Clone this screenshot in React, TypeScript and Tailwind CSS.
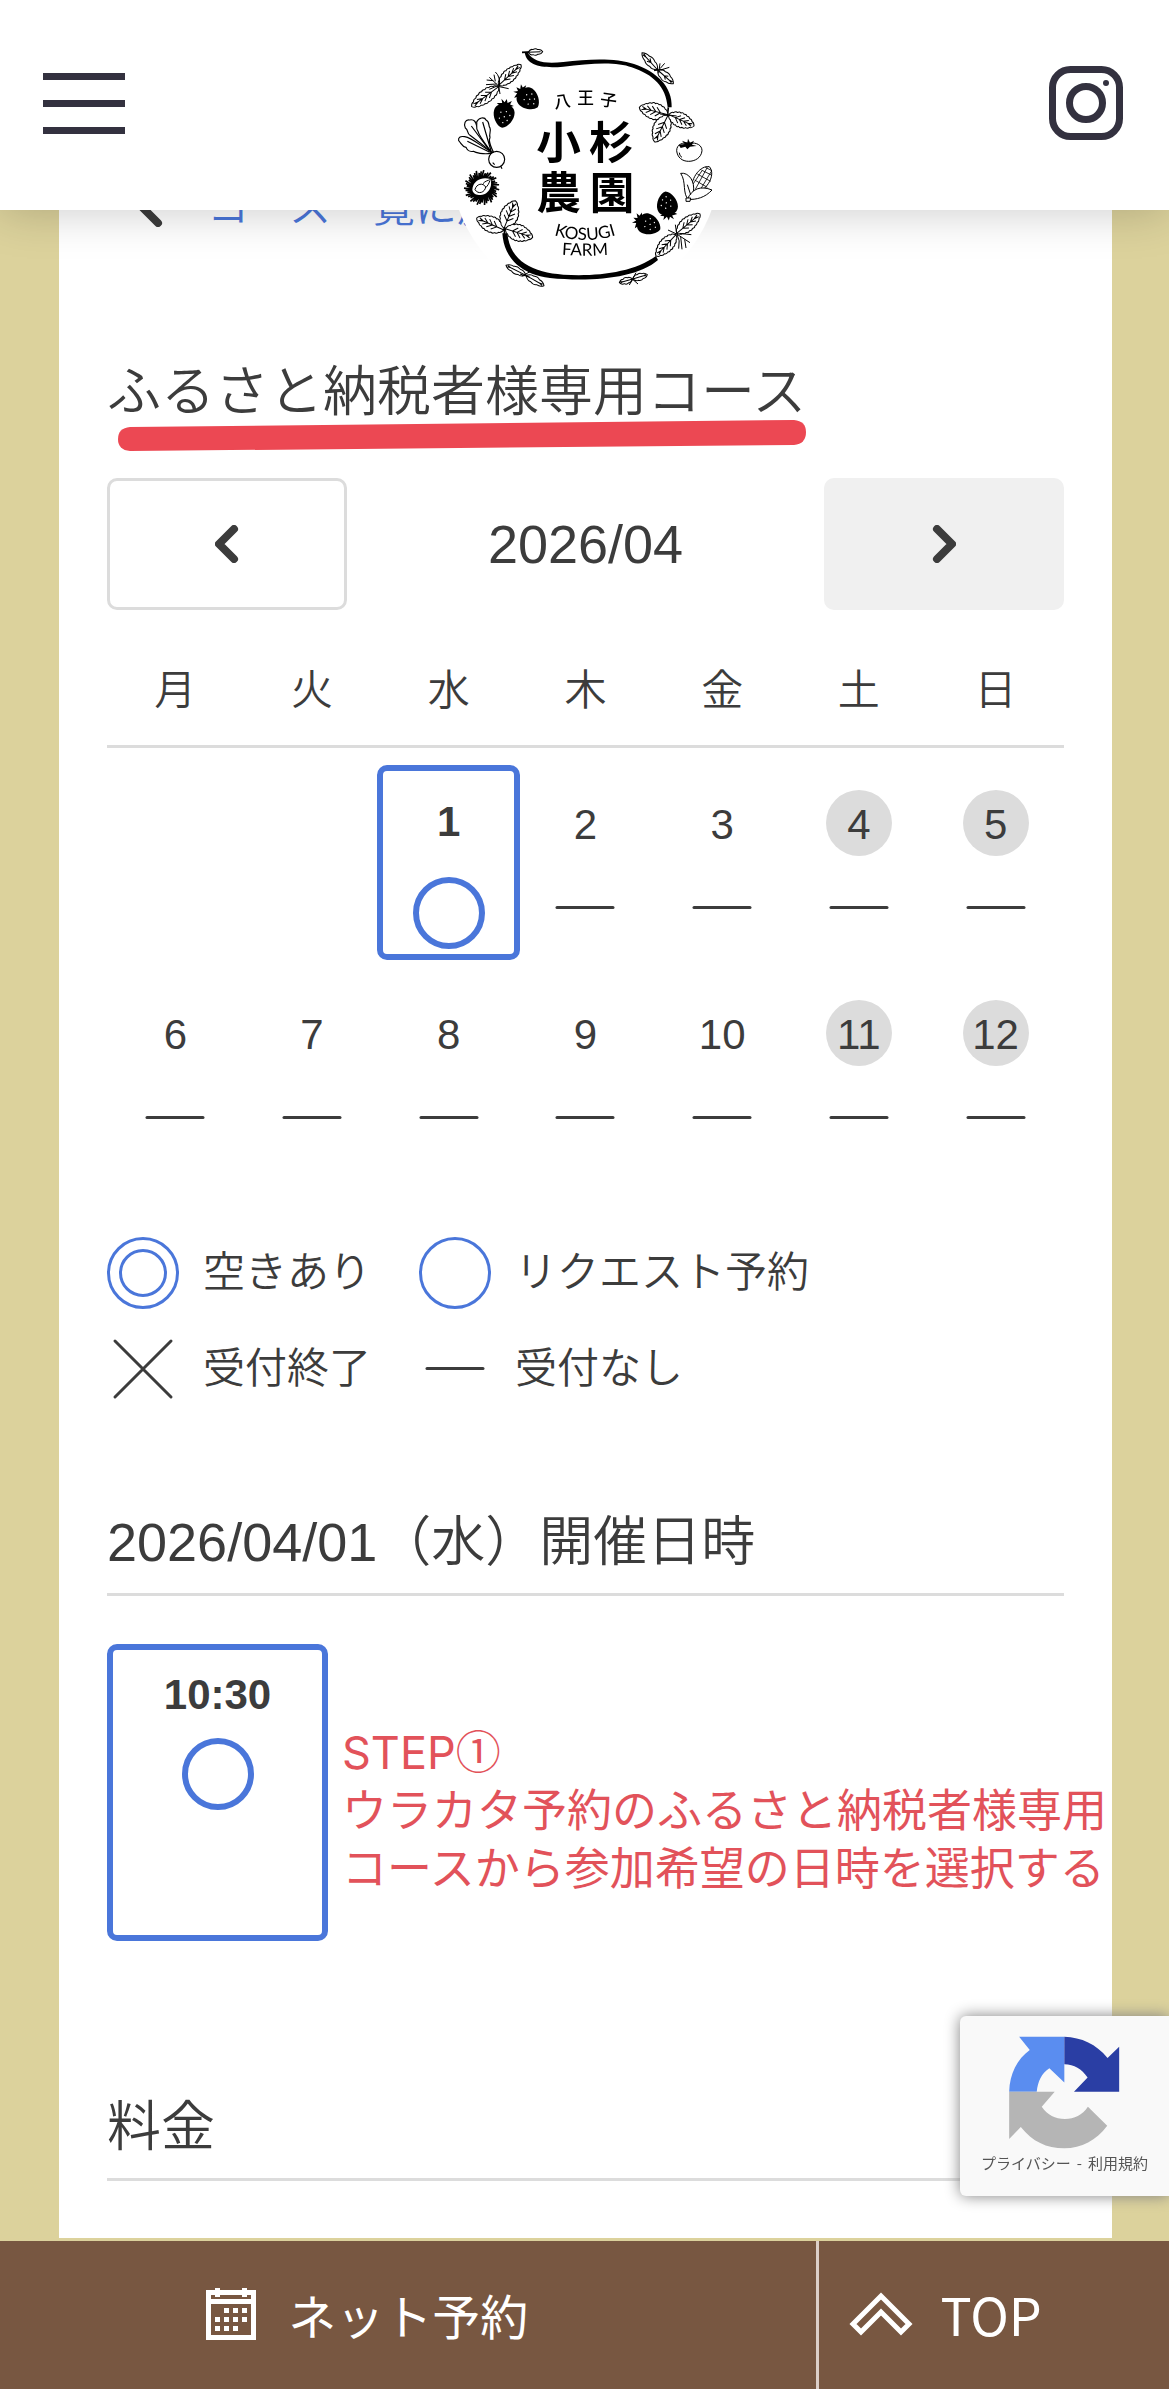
import React from "react";

const JP = "font-['Liberation_Sans','Noto_Sans_CJK_JP',sans-serif]";

/* ---------- Logo ---------- */

type LeafProps = { x: number; y: number; tx: number; ty: number; w: number; teeth?: number; veins?: number };

/* A leaf with a scalloped edge, growing from (x, y) to its tip (tx, ty). */
function Leaf({ x, y, tx, ty, w, teeth = 8, veins = 4 }: LeafProps) {
  const len = Math.hypot(tx - x, ty - y);
  const angle = (Math.atan2(ty - y, tx - x) * 180) / Math.PI;
  const half = (t: number) => (w / 2) * Math.pow(Math.sin(Math.PI * Math.pow(t, 0.9)), 0.75);
  let d = "M0 0";
  for (let i = 1; i <= teeth; i++) {
    const t = i / teeth;
    const m = (i - 0.4) / teeth;
    d += ` Q${m * len} ${-half(m) - 5} ${t * len} ${-half(Math.min(t, 1))}`;
  }
  for (let i = teeth - 1; i >= 0; i--) {
    const t = i / teeth;
    const m = (i + 0.6) / teeth;
    d += ` Q${m * len} ${half(m) + 5} ${t * len} ${half(t)}`;
  }
  for (let i = 1; i <= veins; i++) {
    const t = 0.1 + (i * 0.65) / veins;
    const e = Math.min(t + 0.16, 0.95);
    d += ` M${t * len} 0 L${e * len} ${-half(e) * 0.6} M${t * len} 0 L${e * len} ${half(e) * 0.6}`;
  }
  d += ` M0 0 L${len * 0.86} 0`;
  return <path d={d} transform={`translate(${x} ${y}) rotate(${angle})`} fill="#fff" stroke="#000" strokeWidth={3} strokeLinejoin="round" />;
}

function Strawberry({ x, y, r }: { x: number; y: number; r: number }) {
  return (
    <g transform={`translate(${x} ${y}) rotate(${r})`}>
      <path d="M0 42 C-18 38 -34 12 -31 -8 C-28 -26 -12 -30 0 -28 C12 -30 28 -26 31 -8 C34 12 18 38 0 42Z" />
      <path d="M-26 -30 L-10 -32 L-14 -44 L-3 -35 L2 -46 L6 -34 L18 -42 L14 -31 L26 -28 L8 -20 L-12 -20Z" />
      <g fill="#fff">
        <circle cx="-10" cy="-4" r="2" />
        <circle cx="6" cy="-8" r="2" />
        <circle cx="18" cy="2" r="2" />
        <circle cx="2" cy="8" r="2" />
        <circle cx="-12" cy="14" r="2" />
        <circle cx="12" cy="18" r="2" />
        <circle cx="0" cy="26" r="2" />
      </g>
    </g>
  );
}

const spikes = Array.from({ length: 44 }, (_, i) => {
  const a = (i * Math.PI * 2) / 44;
  const r = i % 3 === 0 ? 53 : i % 3 === 1 ? 45 : 49;
  return `M${30 * Math.cos(a)} ${30 * Math.sin(a)} L${r * Math.cos(a + 0.12)} ${r * Math.sin(a + 0.12)}`;
}).join(" ");

function Logo() {
  return (
    <svg viewBox="0 0 930 840" className="h-[280px] w-[310px]" role="img" aria-label="八王子 小杉農園 KOSUGI FARM">
      <circle cx="466" cy="436" r="402" fill="#fff" />

      <path d="M284 97 C290 140 340 145 400 140 C480 130 560 124 605 142 C670 164 708 200 713 262 L725 262 C728 200 680 155 612 132 C560 114 480 116 400 126 C350 132 312 128 292 97Z" />
      <path d="M217 640 C222 720 280 765 360 774 C480 786 620 776 684 720 L678 708 C610 758 500 770 400 764 C310 758 240 725 232 640Z" />
      <path d="M276 97 L320 95 M715 262 L712 290 M222 655 L225 615" stroke="#000" strokeWidth={5} fill="none" />

      <Leaf x={294} y={97} tx={338} ty={95} w={16} teeth={3} veins={0} />
      <Leaf x={683} y={150} tx={636} ty={98} w={22} teeth={3} veins={2} />
      <Leaf x={683} y={150} tx={730} ty={191} w={24} teeth={3} veins={2} />
      <path d="M672 152 L700 148 M686 160 L690 130 M690 146 L704 130 M692 150 L718 142" stroke="#000" strokeWidth={3} />

      <Leaf x={206} y={196} tx={273} ty={134} w={34} />
      <Leaf x={206} y={200} tx={125} ty={260} w={36} />
      <path d="M208 200 L178 172 M208 200 Q212 170 196 156 M200 192 L168 194 M190 182 L170 180 M196 184 L192 164 M208 200 L236 206 M206 198 L210 222 M206 196 L178 208" stroke="#000" strokeWidth={3} fill="none" />

      <Strawberry x={292} y={234} r={-48} />
      <Strawberry x={222} y={282} r={8} />

      <g fill="#fff" stroke="#000" strokeWidth={3.5} strokeLinejoin="round">
        <path d="M184 400 C160 404 136 398 130 394 C122 396 112 392 108 382 C96 380 94 370 86 362 C84 352 90 348 104 350 C126 354 150 376 184 396Z" />
        <path d="M184 396 C164 380 136 358 120 346 C110 340 116 330 106 324 C100 312 106 298 118 300 C134 296 138 308 140 318 C148 320 146 332 154 338 C160 352 172 372 184 396Z" />
        <path d="M184 396 C168 374 148 350 144 334 C136 324 142 314 140 306 C146 292 164 290 168 300 C180 304 174 318 180 324 C184 334 176 344 180 352 C174 366 182 378 190 396Z" />
        <path d="M112 364 L178 396 M124 318 L182 396 M158 306 L184 396" fill="none" />
        <circle cx="200" cy="418" r="24" />
        <path d="M212 438 L216 446 M188 428 L194 434 M176 400 L192 396" fill="none" />
      </g>

      <g transform="translate(155 503)">
        <path d={spikes} stroke="#000" strokeWidth={5} />
        <circle r="34" />
        <path d="M-28 6 C-26 -22 0 -34 26 -26 C34 -4 20 22 -4 22 C-16 22 -26 18 -28 6Z" fill="#fff" />
        <path d="M-20 6 C-16 -12 4 -16 12 -2 C10 14 -10 22 -20 6Z M4 -12 C10 -20 20 -22 26 -24 M12 0 C18 -6 22 -12 24 -20" fill="none" stroke="#000" strokeWidth={3} />
      </g>

      <Leaf x={222} y={630} tx={140} ty={594} w={44} />
      <Leaf x={222} y={625} tx={256} ty={542} w={50} />
      <Leaf x={226} y={626} tx={308} ty={652} w={46} />
      <Leaf x={288} y={766} tx={228} ty={736} w={18} teeth={3} veins={1} />
      <Leaf x={288} y={766} tx={342} ty={797} w={20} teeth={3} veins={1} />
      <path d="M276 768 L306 752 M270 762 L300 772" stroke="#000" strokeWidth={3} />
      <Leaf x={608} y={777} tx={568} ty={788} w={16} teeth={3} veins={1} />
      <Leaf x={608} y={777} tx={652} ty={764} w={18} teeth={3} veins={1} />
      <path d="M598 795 L618 758 M608 778 L624 792" stroke="#000" strokeWidth={3} />

      <Leaf x={740} y={640} tx={810} ty={582} w={38} />
      <Leaf x={738} y={644} tx={678} ty={708} w={38} />
      <path d="M740 642 L780 668 M752 650 L756 688 M740 640 L736 614 M764 658 L768 684 M748 640 L784 644 M740 642 L714 630 M740 640 Q752 662 746 686" stroke="#000" strokeWidth={3} fill="none" />

      <Strawberry x={712} y={556} r={172} />
      <Strawberry x={652} y={612} r={292} />

      <g fill="#fff" stroke="#000" strokeWidth={3} strokeLinejoin="round">
        <path d="M784 510 C784 470 812 436 838 440 C856 460 838 500 808 516Z" />
        <path d="M794 480 L832 502 M802 462 L842 484 M814 450 L846 466 M826 442 L846 452 M796 508 L832 442 M808 514 L844 454 M788 494 L816 452" strokeWidth={2.5} />
        <path d="M776 540 C756 520 770 486 752 460 C776 456 796 484 790 516Z" />
        <path d="M772 538 C786 506 812 496 846 510 C826 532 800 540 772 538Z" />
        <path d="M768 534 L782 534 L780 544 L768 544Z M772 494 L782 524" />
        <path d="M740 392 C740 372 760 366 778 370 C800 366 816 376 816 392 C814 414 794 424 776 424 C756 424 742 412 740 392Z" />
        <path d="M748 398 Q748 408 756 412" fill="none" />
      </g>
      <path d="M746 374 L764 372 L756 362 L772 368 L774 356 L780 368 L792 362 L786 374 L800 378 L780 380 L772 388 L766 380 L752 384Z" />

      <Leaf x={714} y={284} tx={628} ty={262} w={46} />
      <Leaf x={714} y={286} tx={674} ty={366} w={48} />
      <Leaf x={716} y={284} tx={792} ty={318} w={40} />
      <path d="M690 282 L740 288" stroke="#000" strokeWidth={3} />

      <g className="font-['Noto_Sans_CJK_JP',sans-serif]" textAnchor="middle">
        <g fontSize="50" fontWeight="500">
          <text x="397" y="262" transform="rotate(-8 397 245)">八</text>
          <text x="467" y="253">王</text>
          <text x="536" y="259" transform="rotate(8 536 240)">子</text>
        </g>
        <g fontSize="134" fontWeight="700">
          <text x="386" y="416">小</text>
          <text x="544" y="416">杉</text>
          <text x="386" y="568">農</text>
          <text x="546" y="568">園</text>
        </g>
      </g>
      <path id="kosugi-arc" d="M350 638 Q465 682 580 638" fill="none" />
      <path id="farm-arc" d="M370 702 Q465 712 560 702" fill="none" />
      <g className="font-['Lato',sans-serif]" fontSize="51" fontWeight="400" textAnchor="middle">
        <text>
          <textPath href="#kosugi-arc" startOffset="50%">KOSUGI</textPath>
        </text>
        <text>
          <textPath href="#farm-arc" startOffset="50%">FARM</textPath>
        </text>
      </g>
    </svg>
  );
}

/* ---------- Icons ---------- */

function InstagramIcon() {
  return (
    <svg viewBox="0 0 74 74" className="size-[74px]" fill="none" stroke="#33313f" strokeWidth={7}>
      <rect x="3.5" y="3.5" width="67" height="67" rx="18" />
      <circle cx="37" cy="37" r="16.5" />
      <circle cx="57" cy="17" r="3" fill="#33313f" stroke="none" />
    </svg>
  );
}

function Chevron({ dir }: { dir: "left" | "right" }) {
  return (
    <svg viewBox="0 0 24 38" className="h-[38px] w-6" fill="none" stroke="#3c3c3c" strokeWidth={8} strokeLinecap="round" strokeLinejoin="round">
      <path d={dir === "left" ? "M19 4 L4 19 L19 34" : "M5 4 L20 19 L5 34"} />
    </svg>
  );
}

function Mark({ kind, bold = false }: { kind: "double" | "circle" | "cross" | "dash"; bold?: boolean }) {
  return (
    <svg viewBox="0 0 72 72" className="size-[72px] shrink-0" fill="none" strokeWidth={3} strokeLinecap="round">
      {kind === "circle" && <circle cx="36" cy="36" r={bold ? 33 : 34.5} stroke="#4a76da" strokeWidth={bold ? 6 : 3} />}
      {kind === "double" && (
        <g stroke="#4a76da">
          <circle cx="36" cy="36" r="34.5" />
          <circle cx="36" cy="36" r="22.5" />
        </g>
      )}
      {kind === "cross" && <path d="M8 8 L64 64 M64 8 L8 64" stroke="#3c3c3c" />}
      {kind === "dash" && <path d="M8 35.5 H64" stroke="#3c3c3c" />}
    </svg>
  );
}

function CalendarIcon() {
  const dots = [
    [18, 20], [27, 20], [36, 20],
    [9, 29], [18, 29], [27, 29], [36, 29],
    [9, 38], [18, 38], [27, 38],
  ];
  return (
    <svg viewBox="0 0 50 52" className="h-[52px] w-[50px]" fill="#fff">
      <path fillRule="evenodd" d="M0 2 H50 V52 H0Z M5 7 H45 V11 H5Z M5 16 H45 V47 H5Z" />
      <rect x="9" y="0" width="5" height="9" />
      <rect x="36" y="0" width="5" height="9" />
      {dots.map(([x, y]) => (
        <rect key={`${x}-${y}`} x={x} y={y} width="5" height="5" />
      ))}
    </svg>
  );
}

function UpIcon() {
  return (
    <svg viewBox="0 0 64 44" className="h-11 w-16" fill="none" stroke="#fff" strokeWidth={5}>
      <path d="M32 4 L60 32 L52 40 L32 20 L12 40 L4 32Z" />
    </svg>
  );
}

function RecaptchaIcon() {
  return (
    <svg viewBox="0 0 336 340" className="h-[113px] w-28">
      <path d="M30 2 H166 V140 L121 97 C98 112 86 136 83 168 H0 C2 112 24 70 62 42Z" fill="#5a8df0" />
      <path d="M166 2 C218 4 262 24 296 66 L331 32 V168 H195 L236 125 C218 98 196 86 166 85Z" fill="#2a3ea4" />
      <path d="M0 168 H137 L98 213 C116 238 138 250 168 250 C196 250 220 238 237 213 L295 270 C262 314 218 338 166 338 C112 338 70 318 35 274 L0 310Z" fill="#b5b5b5" />
    </svg>
  );
}

/* ---------- Calendar ---------- */

const weekdays = ["月", "火", "水", "木", "金", "土", "日"];
const weeks: (number | null)[][] = [
  [null, null, 1, 2, 3, 4, 5],
  [6, 7, 8, 9, 10, 11, 12],
];

function DayCell({ day, weekend }: { day: number; weekend: boolean }) {
  if (day === 1) {
    return (
      <button type="button" className="-mx-[3px] -mb-0.5 flex h-[195px] w-[calc(100%+6px)] flex-col items-center rounded-[10px] border-6 border-[#4a76da] pt-[18px] font-bold">
        <span className="flex size-[66px] shrink-0 items-center justify-center">{day}</span>
        <span className="mt-[22px]">
          <Mark kind="circle" bold />
        </span>
      </button>
    );
  }
  return (
    <div className="flex h-[193px] flex-col items-center pt-[25px]">
      <span className={`flex size-[66px] items-center justify-center rounded-full pt-1 ${weekend ? "bg-[#dcdcdc]" : ""}`}>{day}</span>
      <span className="mt-4">
        <Mark kind="dash" />
      </span>
    </div>
  );
}

function Calendar() {
  return (
    <table className="mt-[26px] w-full table-fixed border-separate border-spacing-0 text-[42px] leading-none">
      <thead>
        <tr>
          {weekdays.map((d) => (
            <th key={d} scope="col" className="h-[112px] border-b-3 border-[#dcdcdc] p-0 text-center font-[350]">
              {d}
            </th>
          ))}
        </tr>
      </thead>
      <tbody>
        {weeks.map((week, i) => (
          <tr key={i}>
            {week.map((day, j) => (
              <td key={j} className="p-0 pt-[17px] align-top">
                {day !== null && <DayCell day={day} weekend={j > 4} />}
              </td>
            ))}
          </tr>
        ))}
      </tbody>
    </table>
  );
}

function LegendItem({ kind, label }: { kind: "double" | "circle" | "cross" | "dash"; label: string }) {
  return (
    <li className="flex items-center gap-6">
      <Mark kind={kind} />
      <span>{label}</span>
    </li>
  );
}

/* ---------- Page ---------- */

export default function App() {
  return (
    <div className={`min-h-screen bg-[#dcd29c] pb-[151px] font-[350] text-[#3c3c3c] ${JP}`}>
      <header className="fixed inset-x-0 top-0 z-20 flex h-[210px] items-start justify-between bg-white pr-[46px] pl-[43px] shadow-[0_0_45px_rgba(0,0,0,0.22)]">
        <button type="button" aria-label="メニュー" className="mt-[73px] flex w-[82px] flex-col gap-5">
          <span className="h-[7px] w-full bg-[#33313f]" />
          <span className="h-[7px] w-full bg-[#33313f]" />
          <span className="h-[7px] w-full bg-[#33313f]" />
        </button>
        <a href="#home" className="absolute top-5 left-1/2 -translate-x-1/2">
          <Logo />
        </a>
        <a href="#instagram" aria-label="Instagram" className="mt-[66px]">
          <InstagramIcon />
        </a>
      </header>

      <main className="mr-[57px] ml-[59px] bg-white px-12 pt-[178px] pb-[57px]">
        <a href="#courses" className="flex h-[60px] items-center gap-11 pl-8 text-[42px] leading-none text-[#4a76da]">
          <Chevron dir="left" />
          コース一覧に戻る
        </a>

        <div className="relative mt-[114px]">
          <h1 className="text-[54px] leading-[80px] font-[350]">ふるさと納税者様専用コース</h1>
          <svg viewBox="0 0 688 32" className="absolute top-[67px] left-[11px] h-8 w-[688px]">
            <path d="M12 8 L676 1 Q688 2 688 13 Q688 25 676 26 L12 32 Q0 31 0 20 Q0 9 12 8Z" fill="#ec4853" />
          </svg>
        </div>

        <div className="mt-[46px] flex items-center justify-between">
          <button type="button" aria-label="前の月" className="flex h-[132px] w-60 items-center justify-center rounded-[10px] border-3 border-[#dcdcdc]">
            <Chevron dir="left" />
          </button>
          <p className="text-[54px] leading-none">2026/04</p>
          <button type="button" aria-label="次の月" className="flex h-[132px] w-60 items-center justify-center rounded-[10px] bg-[#f0f0f0]">
            <Chevron dir="right" />
          </button>
        </div>

        <Calendar />

        <ul className="mt-[69px] grid w-fit grid-cols-[auto_auto] gap-x-12 gap-y-6 text-[42px] leading-none">
          <LegendItem kind="double" label="空きあり" />
          <LegendItem kind="circle" label="リクエスト予約" />
          <LegendItem kind="cross" label="受付終了" />
          <LegendItem kind="dash" label="受付なし" />
        </ul>

        <h2 className="mt-[97px] border-b-3 border-[#dcdcdc] pb-[11px] text-[54px] leading-[80px] font-[350]">2026/04/01（水）開催日時</h2>

        <div className="mt-12 flex items-start gap-3.5">
          <button type="button" className="flex h-[297px] w-[221px] shrink-0 flex-col items-center rounded-[10px] border-6 border-[#4a76da] pt-6 text-[42px] leading-[42px] font-bold">
            10:30
            <span className="mt-[22px]">
              <Mark kind="circle" bold />
            </span>
          </button>
          <p className="-mr-12 mt-[77px] font-['Inter','Noto_Sans_CJK_JP',sans-serif] text-[45px] leading-[58px] font-normal whitespace-nowrap text-[#e2525a]">
            STEP<span className="font-['Noto_Sans_CJK_JP',sans-serif]">①</span>
            <br />
            ウラカタ予約のふるさと納税者様専用
            <br />
            コースから参加希望の日時を選択する
          </p>
        </div>

        <h2 className="mt-[146px] border-b-3 border-[#dcdcdc] pb-[11px] text-[54px] leading-[80px] font-[350]">料金</h2>
      </main>

      <aside className="fixed right-0 bottom-[193px] z-10 flex h-[180px] w-[209px] flex-col items-center rounded-l-md bg-[#f9f9f9] pt-5 shadow-[0_0_15px_gray]">
        <RecaptchaIcon />
        <p className="mt-[3px] flex gap-1.5 font-['Noto_Sans_CJK_JP',sans-serif] text-[15px] leading-[22px] font-normal text-[#555]">
          <a href="#privacy">プライバシー</a>
          <span>-</span>
          <a href="#terms">利用規約</a>
        </p>
      </aside>

      <nav className="fixed inset-x-0 bottom-0 z-20 flex h-[148px] bg-[#785741] pb-0.5 font-['Noto_Sans_CJK_JP',sans-serif] text-[48px] leading-none font-normal text-white">
        <a href="#reserve" className="flex w-[70%] items-center justify-center gap-8 pr-[84px]">
          <CalendarIcon />
          ネット予約
        </a>
        <a href="#top" className="-mb-0.5 -ml-0.5 flex flex-1 items-center justify-center gap-7 border-l-3 border-[#dccfc8] pr-[98px] pb-0.5 text-[52px]">
          <UpIcon />
          TOP
        </a>
      </nav>
    </div>
  );
}
